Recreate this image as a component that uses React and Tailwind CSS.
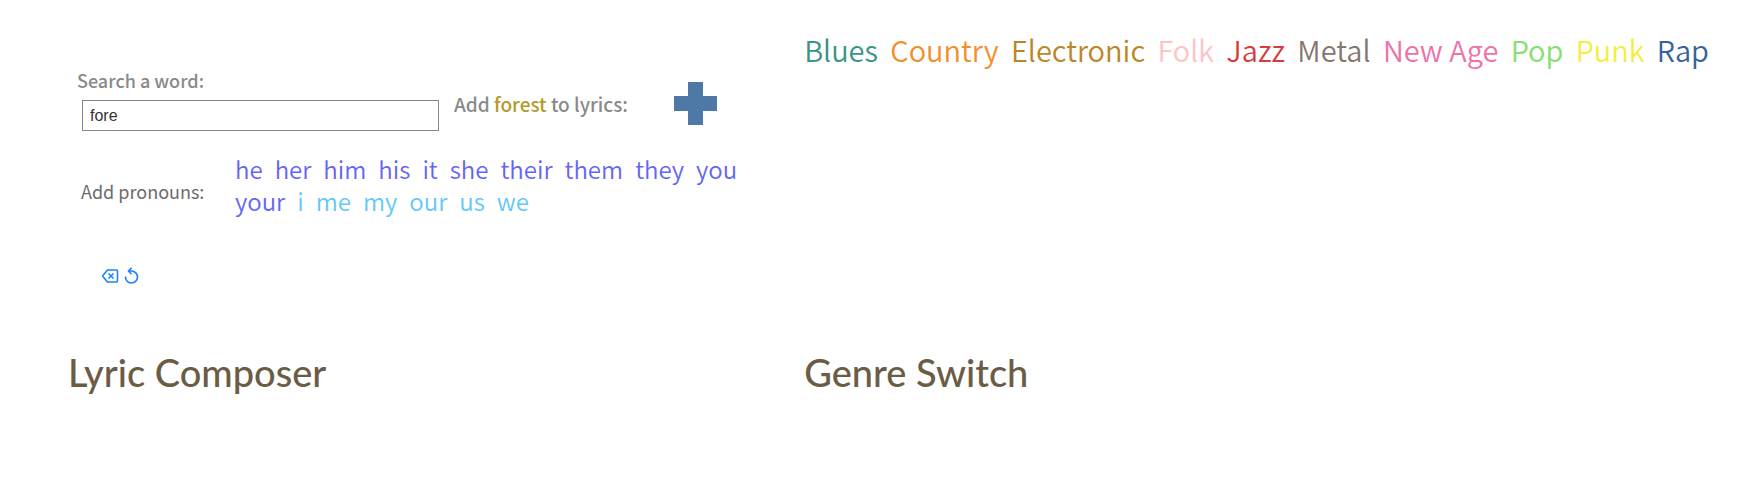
import { useState } from "react";

const genres = [
  ["Blues", "text-[#3b9488]"],
  ["Country", "text-[#f28e2b]"],
  ["Electronic", "text-[#bb8626]"],
  ["Folk", "text-[#ffc3c3]"],
  ["Jazz", "text-[#d63c3f]"],
  ["Metal", "text-[#85766f]"],
  ["New Age", "text-[#ee72aa]"],
  ["Pop", "text-[#83e070]"],
  ["Punk", "text-[#f4ee42]"],
  ["Rap", "text-[#38629c]"],
];

const thirdPerson = ["he", "her", "him", "his", "it", "she", "their", "them", "they", "you", "your"];
const firstPerson = ["i", "me", "my", "our", "us", "we"];

function Composer() {
  const [word, setWord] = useState("fore");
  return (
    <section className="pl-[77px] pt-[66px]">
      <div className="flex items-start">
        <div className="w-[362px]">
          <label htmlFor="word" className="block text-[18px] leading-7 font-medium text-[#898989]">
            Search a word:
          </label>
          <input
            id="word"
            value={word}
            onChange={(e) => setWord(e.target.value)}
            className="ml-[5px] mt-[6px] h-[31px] w-[357px] border border-[#868686] px-[7px] font-['Liberation_Sans',sans-serif] text-base text-[#333] outline-none"
          />
        </div>
        <p className="ml-[15px] mt-6 w-[220px] text-[19px] leading-7 font-medium text-[#898989]">
          Add <span className="text-[#b49a2b]">forest</span> to lyrics:
        </p>
        <button aria-label="Add word" className="mt-4">
          <svg viewBox="0 0 43 43" className="size-[43px] fill-[#4e79a7]">
            <path d="M14 0h15v14h14v15H29v14H14V29H0V14h14z" />
          </svg>
        </button>
      </div>
      <div className="mt-[22px] flex items-end">
        <p className="ml-1 w-[154px] pb-3 text-[18px] leading-7 text-[#6c6c6c]">Add pronouns:</p>
        <div className="flex w-[520px] flex-wrap gap-x-3 text-2xl leading-8 font-[350]">
          {thirdPerson.map((w) => (
            <button key={w} className="text-[#6565f5]">{w}</button>
          ))}
          {firstPerson.map((w) => (
            <button key={w} className="text-[#62c8fc]">{w}</button>
          ))}
        </div>
      </div>
      <div className="ml-6 mt-[50px] flex gap-1 text-[#1a82fb]">
        <button aria-label="Delete last word">
          <svg viewBox="0 0 18 18" className="size-[18px] fill-none stroke-current stroke-[1.6]">
            <path d="M6.5 3h9a1 1 0 0 1 1 1v10a1 1 0 0 1-1 1h-9L1.5 9z" strokeLinejoin="round" />
            <path d="m7.5 6.5 5 5m0-5-5 5" />
          </svg>
        </button>
        <button aria-label="Start over">
          <svg viewBox="0 0 18 18" className="size-[18px] fill-none stroke-current stroke-[1.6]">
            <path d="M2.5 9.5A6 6 0 1 0 8.5 4H5.8M8.5.8 5.5 4l3 3.2" />
          </svg>
        </button>
      </div>
    </section>
  );
}

export default function App() {
  return (
    <main className="grid min-h-screen grid-cols-[45.9%_1fr] grid-rows-[344px_auto] bg-white font-['Noto_Sans_CJK_SC',sans-serif]">
      <Composer />
      <nav aria-label="Genres" className="flex items-start justify-between pr-[43px] pt-[29px] text-[29px] leading-10 font-[350]">
        {genres.map(([name, color]) => (
          <button key={name} className={color}>{name}</button>
        ))}
      </nav>
      <h2 className="pl-[68px] font-['Lato',sans-serif] text-[38px] leading-[56px] font-medium text-[#6b5d45]">Lyric Composer</h2>
      <h2 className="font-['Lato',sans-serif] text-[38px] leading-[56px] font-medium text-[#6b5d45]">Genre Switch</h2>
    </main>
  );
}
